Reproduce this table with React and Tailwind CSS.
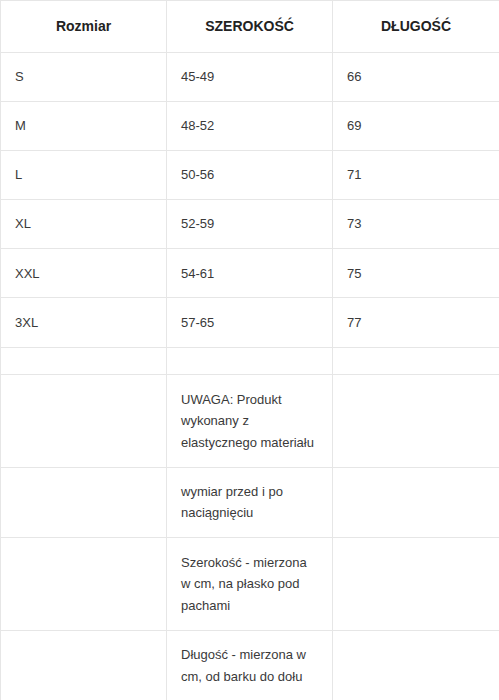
const sizes = [
  { size: 'S', width: '45-49', length: '66' },
  { size: 'M', width: '48-52', length: '69' },
  { size: 'L', width: '50-56', length: '71' },
  { size: 'XL', width: '52-59', length: '73' },
  { size: 'XXL', width: '54-61', length: '75' },
  { size: '3XL', width: '57-65', length: '77' },
]

const notes = [
  'UWAGA: Produkt wykonany z elastycznego materiału',
  'wymiar przed i po naciągnięciu',
  'Szerokość - mierzona w cm, na płasko pod pachami',
  'Długość - mierzona w cm, od barku do dołu',
]

const th = 'border border-[#e6e6e6] px-[14px] py-[14.75px] text-center font-bold text-[14px] leading-[21px] text-[#222]'
const td = 'border border-[#e6e6e6] px-[14px] py-[13.3px] align-top text-[13px] leading-[21.6px] text-[#3a3a3a]'

export default function App() {
  return (
    <div className="bg-white min-h-screen" style={{ fontFamily: '"Liberation Sans", Arial, sans-serif' }}>
      <table className="w-[499px] table-fixed border-collapse">
        <colgroup>
          <col className="w-[166px]" />
          <col className="w-[166px]" />
          <col className="w-[167px]" />
        </colgroup>
        <thead>
          <tr>
            <th className={th}>Rozmiar</th>
            <th className={th}>SZEROKOŚĆ</th>
            <th className={th}>DŁUGOŚĆ</th>
          </tr>
        </thead>
        <tbody>
          {sizes.map(r => (
            <tr key={r.size}>
              <td className={td}>{r.size}</td>
              <td className={td}>{r.width}</td>
              <td className={td}>{r.length}</td>
            </tr>
          ))}
          <tr>
            <td className={td}></td>
            <td className={td}></td>
            <td className={td}></td>
          </tr>
          {notes.map(n => (
            <tr key={n}>
              <td className={td}></td>
              <td className={td}>{n}</td>
              <td className={td}></td>
            </tr>
          ))}
        </tbody>
      </table>
    </div>
  )
}
